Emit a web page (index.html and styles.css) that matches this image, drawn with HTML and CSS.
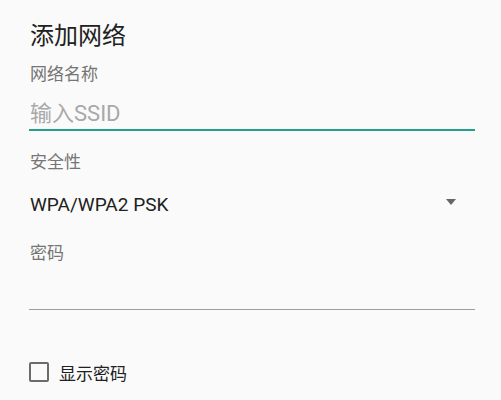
FILE: index.html
```html
<!DOCTYPE html>
<html lang="zh">
<head>
  <meta charset="UTF-8">
  <meta name="viewport" content="width=device-width, initial-scale=1.0">
  <title>添加网络</title>
  <link rel="stylesheet" href="styles.css">
</head>
<body>
  <div class="dialog">
    <h1 class="title">添加网络</h1>

    <label class="label label-ssid" for="ssid">网络名称</label>
    <input class="field field-active" type="text" id="ssid" placeholder="输入SSID">

    <div class="label label-security">安全性</div>
    <div class="select">
      <span class="select-value">WPA/WPA2 PSK</span>
      <span class="select-arrow"></span>
    </div>

    <label class="label label-password" for="password">密码</label>
    <input class="field field-password" type="password" id="password">

    <label class="check-row">
      <input class="check" type="checkbox">
      <span class="check-text">显示密码</span>
    </label>
  </div>
</body>
</html>
```

FILE: styles.css
```css
body {
  margin: 0;
  background: #fafafa;
  font-family: Roboto, "Noto Sans CJK SC", sans-serif;
  color: #212121;
}
.dialog {
  display: flex;
  flex-direction: column;
  padding: 20px 26px 0 29px;
}
.title {
  margin: 0;
  padding-left: 1px;
  font-size: 24px;
  font-weight: 400;
  line-height: 32px;
  color: #212121;
}
.label {
  display: block;
  padding-left: 1px;
  font-size: 17px;
  line-height: 24px;
  color: #757575;
}
.label-ssid {
  margin-top: 10px;
}
.label-security {
  margin-top: 19px;
}
.label-password {
  margin-top: 17px;
}
.field {
  box-sizing: content-box;
  height: 32px;
  margin: 0;
  padding: 0 0 0 1px;
  border: 0;
  border-bottom: 1px solid #9e9e9e;
  background: transparent;
  font-family: inherit;
  font-size: 22px;
  color: #212121;
  outline: none;
}
.field::placeholder {
  color: #a8a8a8;
}
.field-active {
  margin-top: 11px;
  border-bottom: 2px solid #23a08c;
}
.field-password {
  margin-top: 12px;
}
.select {
  display: flex;
  align-items: center;
  justify-content: space-between;
  height: 40px;
  margin-top: 10px;
  padding: 0 19px 0 1px;
}
.select-value {
  font-size: 19px;
  color: #212121;
}
.select-arrow {
  width: 0;
  height: 0;
  margin-top: -4px;
  border-left: 5.5px solid transparent;
  border-right: 5.5px solid transparent;
  border-top: 6px solid #666;
}
.check-row {
  display: flex;
  align-items: center;
  gap: 10px;
  height: 24px;
  margin-top: 50px;
}
.check {
  appearance: none;
  box-sizing: border-box;
  width: 20px;
  height: 20px;
  margin: 0;
  border: 2px solid #6b6b6b;
  border-radius: 2px;
}
.check-text {
  font-size: 17px;
  color: #212121;
}
```
